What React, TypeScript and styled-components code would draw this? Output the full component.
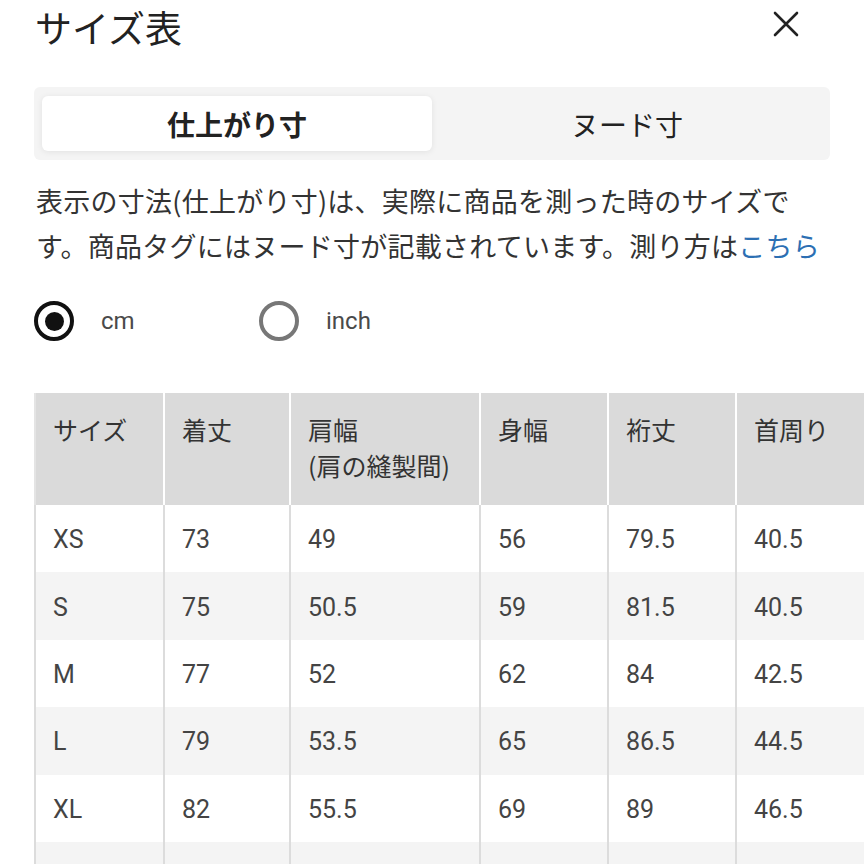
import React from "react";
import styled, { createGlobalStyle } from "styled-components";

const Global = createGlobalStyle`
  html, body { margin: 0; padding: 0; background: #fff; }
  body { font-family: Roboto, "Noto Sans CJK JP", sans-serif; color: #333; overflow: hidden; }
  * { box-sizing: border-box; }
`;

const Page = styled.div`
  width: 864px;
  padding: 0 0 0 34px;
`;

const Header = styled.div`
  display: flex;
  align-items: flex-start;
  justify-content: space-between;
  height: 54px;
  padding-right: 64px;
`;

const Title = styled.h1`
  margin: 0 0 0 1px;
  font-family: "Noto Sans CJK JP", sans-serif;
  font-weight: 400;
  font-size: 37px;
  line-height: 54px;
  color: #222;
`;

const CloseButton = styled.button`
  border: 0;
  background: none;
  padding: 0;
  width: 28px;
  height: 28px;
  display: flex;
  align-items: center;
  justify-content: center;
  margin-top: 10px;
`;

const Tabs = styled.div`
  margin-top: 33px;
  width: 796px;
  height: 73px;
  padding: 9px 8px;
  background: #f4f4f4;
  border-radius: 6px;
  display: grid;
  grid-template-columns: 1fr 1fr;
`;

const Tab = styled.div<{ $active?: boolean }>`
  display: flex;
  align-items: center;
  justify-content: center;
  border-radius: 6px;
  font-family: "Noto Sans CJK JP", sans-serif;
  font-size: 28px;
  font-weight: ${(p) => (p.$active ? 700 : 400)};
  color: #222;
  background: ${(p) => (p.$active ? "#fff" : "transparent")};
  box-shadow: ${(p) => (p.$active ? "0 1px 6px rgba(0,0,0,0.08)" : "none")};
`;

const Description = styled.p`
  margin: 18px 0 0 2px;
  width: 794px;
  font-family: "Noto Sans CJK JP", sans-serif;
  font-size: 27px;
  line-height: 45px;
  letter-spacing: 0.25px;
  color: #333;
  line-break: strict;
`;

const Link = styled.a`
  color: #2c6fb3;
  text-decoration: none;
`;

const RadioRow = styled.div`
  display: flex;
  align-items: center;
  margin-top: 34px;
  height: 38px;
`;

const RadioOption = styled.label`
  display: flex;
  align-items: center;
  width: 225px;
  font-family: Roboto, sans-serif;
  font-size: 24px;
  color: #4a4a4a;
`;

const RadioCircle = styled.span<{ $checked?: boolean }>`
  width: 40px;
  height: 40px;
  border-radius: 50%;
  border: 4px solid ${(p) => (p.$checked ? "#111" : "#777")};
  display: flex;
  align-items: center;
  justify-content: center;
  margin-right: 27px;
  &::after {
    content: "";
    width: 19px;
    height: 19px;
    border-radius: 50%;
    background: ${(p) => (p.$checked ? "#111" : "transparent")};
  }
`;

const Table = styled.table`
  margin-top: 53px;
  border-collapse: collapse;
  table-layout: fixed;
  width: 830px;
  font-family: Roboto, "Noto Sans CJK JP", sans-serif;
`;

const HeadCell = styled.th`
  background: #dadada;
  border-left: 2px solid #fff;
  &:first-child { border-left: 2px solid #e4e4e4; }
  text-align: left;
  vertical-align: top;
  padding: 18px 0 0 17px;
  height: 112px;
  font-weight: 400;
  font-family: "Noto Sans CJK JP", sans-serif;
  font-size: 25px;
  line-height: 36px;
  color: #333;
`;

const Row = styled.tr<{ $shaded?: boolean }>`
  background: ${(p) => (p.$shaded ? "#f4f4f4" : "#fff")};
`;

const Cell = styled.td`
  border-left: 2px solid #dcdcdc;
  height: 67.4px;
  padding: 2px 0 0 17px;
  font-size: 25px;
  color: #444;
  vertical-align: middle;
`;

const columns = [
  { w: 129, label: ["サイズ"] },
  { w: 126, label: ["着丈"] },
  { w: 190, label: ["肩幅", "(肩の縫製間)"] },
  { w: 128, label: ["身幅"] },
  { w: 128, label: ["裄丈"] },
  { w: 129, label: ["首周り"] },
];

const rows = [
  ["XS", "73", "49", "56", "79.5", "40.5"],
  ["S", "75", "50.5", "59", "81.5", "40.5"],
  ["M", "77", "52", "62", "84", "42.5"],
  ["L", "79", "53.5", "65", "86.5", "44.5"],
  ["XL", "82", "55.5", "69", "89", "46.5"],
  ["XXL", "85", "57.5", "73", "91.5", "48.5"],
];

export default function App() {
  return (
    <>
      <Global />
      <Page>
        <Header>
          <Title>サイズ表</Title>
          <CloseButton aria-label="閉じる">
            <svg width="26" height="26" viewBox="0 0 26 26">
              <path d="M2 2 L24 24 M24 2 L2 24" stroke="#222" strokeWidth="2.6" strokeLinecap="round" />
            </svg>
          </CloseButton>
        </Header>
        <Tabs>
          <Tab $active>仕上がり寸</Tab>
          <Tab>ヌード寸</Tab>
        </Tabs>
        <Description>
          表示の寸法(仕上がり寸)は、実際に商品を測った時のサイズです。商品タグにはヌード寸が記載されています。測り方は
          <Link href="#">こちら</Link>
        </Description>
        <RadioRow>
          <RadioOption>
            <RadioCircle $checked />
            cm
          </RadioOption>
          <RadioOption>
            <RadioCircle />
            inch
          </RadioOption>
        </RadioRow>
        <Table>
          <colgroup>
            {columns.map((c, i) => (
              <col key={i} style={{ width: c.w }} />
            ))}
          </colgroup>
          <thead>
            <tr>
              {columns.map((c, i) => (
                <HeadCell key={i}>
                  {c.label.map((l, j) => (
                    <div key={j}>{l}</div>
                  ))}
                </HeadCell>
              ))}
            </tr>
          </thead>
          <tbody>
            {rows.map((r, i) => (
              <Row key={i} $shaded={i % 2 === 1}>
                {r.map((v, j) => (
                  <Cell key={j}>{v}</Cell>
                ))}
              </Row>
            ))}
          </tbody>
        </Table>
      </Page>
    </>
  );
}
